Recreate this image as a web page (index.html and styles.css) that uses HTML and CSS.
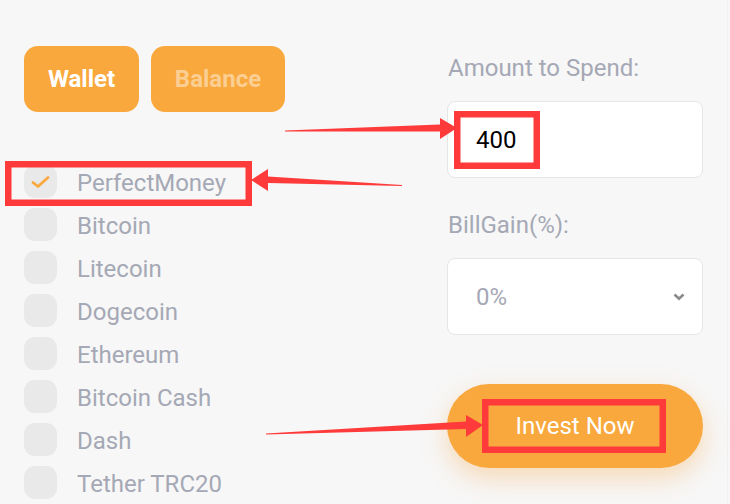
FILE: index.html
```html
<!DOCTYPE html>
<html>
<head>
<meta charset="utf-8">
<link rel="stylesheet" href="styles.css">
</head>
<body>
<div class="page">
  <div class="left">
    <div class="tabs">
      <button class="tab tab-active">Wallet</button>
      <button class="tab tab-muted">Balance</button>
    </div>
    <ul class="methods">
      <li class="method"><span class="box checked"><svg width="19" height="14" viewBox="0 0 19 14"><path d="M2 7.5 L7 11.5 L17 2.5" fill="none" stroke="#f9a83d" stroke-width="2.8" stroke-linecap="round" stroke-linejoin="round"/></svg></span><span class="name">PerfectMoney</span></li>
      <li class="method"><span class="box"></span><span class="name">Bitcoin</span></li>
      <li class="method"><span class="box"></span><span class="name">Litecoin</span></li>
      <li class="method"><span class="box"></span><span class="name">Dogecoin</span></li>
      <li class="method"><span class="box"></span><span class="name">Ethereum</span></li>
      <li class="method"><span class="box"></span><span class="name">Bitcoin Cash</span></li>
      <li class="method"><span class="box"></span><span class="name">Dash</span></li>
      <li class="method"><span class="box"></span><span class="name">Tether TRC20</span></li>
    </ul>
  </div>
  <div class="right">
    <div class="label">Amount to Spend:</div>
    <div class="field"><span class="value">400</span></div>
    <div class="label label-second">BillGain(%):</div>
    <div class="field select"><span class="placeholder">0%</span>
      <svg class="chev" width="12" height="8" viewBox="0 0 12 8"><path d="M1.5 1.5 L6 5.8 L10.5 1.5" fill="none" stroke="#8a8a8a" stroke-width="2.6" stroke-linejoin="miter"/></svg>
    </div>
    <button class="invest">Invest Now</button>
  </div>
</div>
<svg class="annot" width="730" height="504" viewBox="0 0 730 504">
  <g fill="#ff3a3a">
    <polygon points="285,130.5 440,124.5 440,118 457,128 440,139 440,131.5 285,131.5"/>
    <polygon points="402,185 268,176.5 268,169 251,180 268,191 268,183 402,186"/>
    <polygon points="266,433.5 466,421.5 466,415 483,425 466,437 466,429 266,434.5"/>
  </g>
  <g fill="none" stroke="#ff3a3a" stroke-width="6.5">
    <rect x="457.25" y="114.25" width="79.5" height="51.5"/>
    <rect x="8.25" y="164.25" width="240.5" height="38.5"/>
    <rect x="485.25" y="402.25" width="177.5" height="47.5"/>
  </g>
</svg>
</body>
</html>
```

FILE: styles.css
```css
html, body {
  margin: 0;
  padding: 0;
}
body {
  background: #f7f7f7;
  font-family: Roboto, "Noto Sans", sans-serif;
  width: 730px;
  height: 504px;
  overflow: hidden;
  position: relative;
}
.page {
  display: flex;
  padding: 46px 0 0 24px;
  width: 703px;
  height: 458px;
  border-right: 1px solid #f0f0f0;
}
.left {
  width: 423px;
  display: flex;
  flex-direction: column;
}
.tabs {
  display: flex;
  gap: 12px;
}
.tab {
  border: none;
  background: #f9a83d;
  border-radius: 14px;
  height: 66px;
  font-family: Roboto, sans-serif;
  font-weight: 700;
  font-size: 24px;
  padding: 0;
  color: #fff;
}
.tab-active { width: 115px; }
.tab-muted { width: 134px; color: rgba(255,255,255,0.45); }
.methods {
  list-style: none;
  margin: 53px 0 0 0;
  padding: 0;
  display: flex;
  flex-direction: column;
  gap: 10px;
}
.method {
  display: flex;
  align-items: center;
  gap: 20px;
  height: 33px;
}
.box {
  width: 33px;
  height: 33px;
  border-radius: 11px;
  background: #e9e9e9;
  display: flex;
  align-items: center;
  justify-content: center;
  flex: none;
}
.name {
  font-size: 24px;
  color: #a5a8b5;
  line-height: 33px;
  padding-top: 3px;
}
.right {
  width: 256px;
  display: flex;
  flex-direction: column;
  padding-top: 8px;
}
.label {
  font-size: 24px;
  line-height: 28px;
  color: #a5a8b5;
  padding-left: 1px;
}
.label-second { margin-top: 33px; }
.field {
  margin-top: 19px;
  height: 75px;
  background: #fff;
  border: 1px solid #e6e6e6;
  border-radius: 8px;
  display: flex;
  align-items: center;
  padding: 0 17px 0 28px;
}
.value {
  font-size: 24px;
  color: #000;
}
.select { justify-content: space-between; }
.placeholder {
  font-size: 24px;
  color: #a5a8b5;
}
.invest {
  margin-top: 49px;
  height: 84px;
  border: none;
  border-radius: 42px;
  background: #f9a83d;
  color: #fff;
  font-family: Roboto, sans-serif;
  font-size: 24px;
  box-shadow: 0 10px 26px rgba(245, 160, 60, 0.35);
  padding: 0;
}
.annot {
  position: absolute;
  left: 0;
  top: 0;
  pointer-events: none;
}
```
